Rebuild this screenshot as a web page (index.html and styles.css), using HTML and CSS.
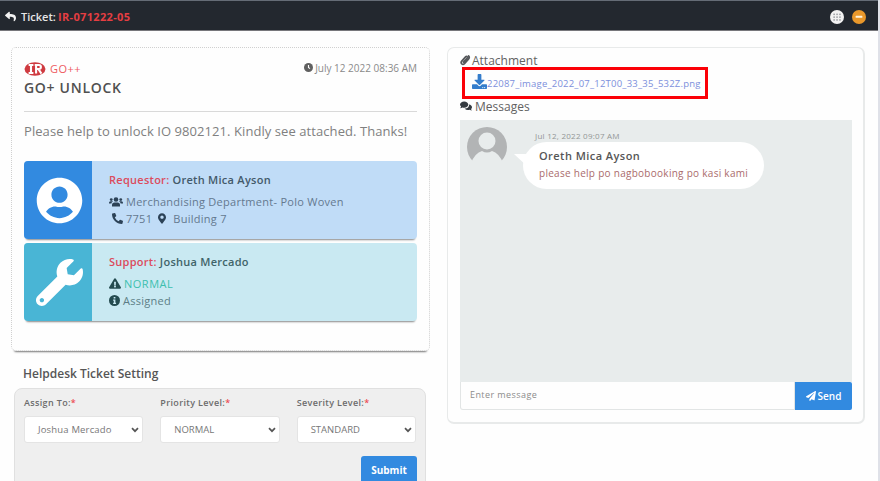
FILE: index.html
```html
<!DOCTYPE html>
<html lang="en">
<head>
<meta charset="utf-8">
<title>Ticket IR-071222-05</title>
<link rel="stylesheet" href="styles.css">
</head>
<body>
<div class="window">
  <header class="topbar">
    <svg class="back" viewBox="0 0 512 512"><path d="M8.309 189.836L184.313 37.851C199.719 24.546 224 35.347 224 56.015v80.053c160.629 1.839 288 34.032 288 186.258 0 61.441-39.581 122.309-83.333 154.132-13.653 9.931-33.111-2.533-28.077-18.631 45.344-145.012-21.507-183.51-176.59-185.742V360c0 20.7-24.3 31.453-39.687 18.164l-176.004-152c-11.071-9.562-11.086-26.753 0-36.328z"/></svg>
    <span class="topbar-label">Ticket:</span>
    <span class="topbar-id">IR-071222-05</span>
    <svg class="round grid" viewBox="0 0 14 14"><circle cx="7" cy="7" r="7" fill="#f2f2f2"/><g fill="#a3a6aa"><rect x="3.3" y="3.6" width="1.7" height="1.5"/><rect x="6.2" y="3.6" width="1.7" height="1.5"/><rect x="9.1" y="3.6" width="1.7" height="1.5"/><rect x="3.3" y="6.4" width="1.7" height="1.5"/><rect x="6.2" y="6.4" width="1.7" height="1.5"/><rect x="9.1" y="6.4" width="1.7" height="1.5"/><rect x="3.3" y="9.2" width="1.7" height="1.5"/><rect x="6.2" y="9.2" width="1.7" height="1.5"/><rect x="9.1" y="9.2" width="1.7" height="1.5"/></g></svg>
    <svg class="round" viewBox="0 0 14 14"><circle cx="7" cy="7" r="7" fill="#e9982b"/><rect x="3.6" y="5.8" width="6.8" height="2" rx=".6" fill="#fff3dc"/></svg>
  </header>

  <main class="columns">
    <div class="left">
      <section class="ticket">
        <div class="ticket-head">
          <svg class="logo" viewBox="0 0 22 14"><ellipse cx="11" cy="7" rx="10.5" ry="6.7" fill="#cf3a40"/><g fill="none" stroke="#fff" stroke-width="2.1"><path d="M7 2.6v8.8M4.6 3h4.8M4.6 11h4.8M12.1 2.5v9M10.7 3h4.2q2 0 2 2t-2 2h-2.8M14.4 7l3 4.6"/></g></svg>
          <span class="brand">GO++</span>
          <svg class="clock" viewBox="0 0 16 16"><circle cx="8" cy="8" r="8" fill="#606060"/><path d="M8 3.5V8l2.6 2" fill="none" stroke="#fff" stroke-width="2"/></svg>
          <span class="date">July 12 2022 08:36 AM</span>
        </div>
        <h1>GO+ UNLOCK</h1>
        <p class="description">Please help to unlock IO 9802121. Kindly see attached. Thanks!</p>
        <article class="person requestor">
          <div class="tile"><svg viewBox="0 0 496 512"><path d="M248 8C111 8 0 119 0 256s111 248 248 248 248-111 248-248S385 8 248 8zm0 96c48.6 0 88 39.4 88 88s-39.4 88-88 88-88-39.4-88-88 39.4-88 88-88zm0 344c-58.7 0-111.3-26.6-146.5-68.2 18.8-35.4 55.6-59.8 98.5-59.8 2.4 0 4.8.4 7.1 1.1 13 4.2 26.6 6.9 40.9 6.9 14.3 0 28-2.7 40.9-6.9 2.3-.7 4.7-1.1 7.1-1.1 42.9 0 79.7 24.4 98.5 59.8C359.3 421.4 306.7 448 248 448z"/></svg></div>
          <div class="info">
            <div class="name"><b>Requestor:</b> Oreth Mica Ayson</div>
            <div class="line"><svg class="users" viewBox="0 0 28 20"><circle cx="14" cy="5" r="4.6"/><circle cx="4.5" cy="5.2" r="2.8"/><circle cx="23.5" cy="5.2" r="2.8"/><path d="M6 19v-3q0-5 5-5h6q5 0 5 5v3zM0 13v-1.500q0-3 3-3h3.500q1 0 1.700.6Q5 10.600 4.700 13zM28 13v-1.500q0-3-3-3h-3.500q-1 0-1.700.6Q23 10.600 23.300 13z"/></svg><span class="dept">Merchandising Department- Polo Woven</span></div>
            <div class="line contact"><svg class="phone" viewBox="0 0 512 512"><path d="M497.39 361.8l-112-48a24 24 0 0 0-28 6.9l-49.6 60.6A370.66 370.66 0 0 1 130.6 204.11l60.6-49.6a23.94 23.94 0 0 0 6.9-28l-48-112A24.16 24.16 0 0 0 122.6.61l-104 24A24 24 0 0 0 0 48c0 256.5 207.9 464 464 464a24 24 0 0 0 23.4-18.6l24-104a24.29 24.29 0 0 0-14.01-27.6z"/></svg><span class="ext">7751</span><svg class="pin" viewBox="0 0 384 512"><path d="M172.268 501.67C26.97 291.031 0 269.413 0 192 0 85.961 85.961 0 192 0s192 85.961 192 192c0 77.413-26.97 99.031-172.268 309.67-9.535 13.774-29.93 13.773-39.464 0zM192 272c44.183 0 80-35.817 80-80s-35.817-80-80-80-80 35.817-80 80 35.817 80 80 80z"/></svg><span class="building">Building 7</span></div>
          </div>
        </article>
        <article class="person support">
          <div class="tile"><svg viewBox="0 0 512 512"><path d="M507.73 109.1c-2.24-9.03-13.54-12.09-20.12-5.51l-74.36 74.36-67.88-11.31-11.31-67.88 74.36-74.36c6.62-6.62 3.43-17.9-5.66-20.16-47.38-11.74-99.55.91-136.58 37.93-39.64 39.64-50.55 97.1-34.05 147.2L18.74 402.76c-24.99 24.99-24.99 65.51 0 90.5 24.99 24.99 65.51 24.99 90.5 0l213.21-213.21c50.12 16.71 107.47 5.68 147.37-34.22 37.07-37.07 49.7-89.32 37.91-136.73zM64 472c-13.25 0-24-10.75-24-24 0-13.26 10.75-24 24-24s24 10.74 24 24c0 13.25-10.75 24-24 24z"/></svg></div>
          <div class="info">
            <div class="name"><b>Support:</b> Joshua Mercado</div>
            <div class="line"><svg class="warn" viewBox="0 0 576 512"><path d="M569.517 440.013C587.975 472.007 564.806 512 527.94 512H48.054c-36.937 0-59.999-40.055-41.577-71.987L246.423 23.985c18.467-32.009 64.72-31.951 83.154 0l239.94 416.028zM288 354c-25.405 0-46 20.595-46 46s20.595 46 46 46 46-20.595 46-46-20.595-46-46-46zm-43.673-165.346l7.418 136c.347 6.364 5.609 11.346 11.982 11.346h48.546c6.373 0 11.635-4.982 11.982-11.346l7.418-136c.375-6.874-5.098-12.654-11.982-12.654h-63.383c-6.884 0-12.356 5.780-11.981 12.654z"/></svg><span class="priority">NORMAL</span></div>
            <div class="line"><svg class="status-icon" viewBox="0 0 16 16"><circle cx="8" cy="8" r="8"/><path d="M6.800 3h2.500v2.200H6.800zM6 6.500h3.300v4.700h1V13H6v-1.800h1V8.300H6z" fill="#c9e9f2"/></svg><span class="status">Assigned</span></div>
          </div>
        </article>
      </section>

      <h2>Helpdesk Ticket Setting</h2>
      <form class="settings">
        <div class="fields">
          <div class="field"><label>Assign To:<i>*</i></label><div class="select"><span class="assignee">Joshua Mercado</span><svg viewBox="0 0 8 6"><path d="M1 1.200l3 3 3-3"/></svg></div></div>
          <div class="field"><label>Priority Level:<i>*</i></label><div class="select"><span>NORMAL</span><svg viewBox="0 0 8 6"><path d="M1 1.200l3 3 3-3"/></svg></div></div>
          <div class="field"><label>Severity Level:<i>*</i></label><div class="select"><span>STANDARD</span><svg viewBox="0 0 8 6"><path d="M1 1.200l3 3 3-3"/></svg></div></div>
        </div>
        <button type="button" class="submit">Submit</button>
      </form>
    </div>

    <section class="conversation">
      <h3 class="attachment-title"><svg class="clip" viewBox="0 0 16 18"><path d="M5.500 12.500l5.800-6.300q1.200-1.500 0-2.500-1.200-.9-2.400.4L2.800 10.700q-2 2.600 0 4.500 2.200 1.700 4.400-.5l6.300-7q2.500-3.300.2-5.300" fill="none" stroke="#55585b" stroke-width="2.700" stroke-linecap="round"/></svg><span>Attachment</span></h3>
      <div class="attachment"><svg viewBox="0 0 512 512"><path d="M216 0h80c13.300 0 24 10.700 24 24v168h87.700c17.800 0 26.700 21.500 14.100 34.100L269.700 378.300c-7.500 7.500-19.800 7.500-27.300 0L90.100 226.100c-12.600-12.600-3.700-34.100 14.100-34.100H192V24c0-13.300 10.700-24 24-24zm296 376v112c0 13.300-10.700 24-24 24H24c-13.300 0-24-10.700-24-24V376c0-13.300 10.700-24 24-24h146.700l49 49c20.100 20.100 52.500 20.100 72.600 0l49-49H488c13.300 0 24 10.700 24 24zm-124 88c0-11-9-20-20-20s-20 9-20 20 9 20 20 20 20-9 20-20zm64 0c0-11-9-20-20-20s-20 9-20 20 9 20 20 20 20-9 20-20z"/></svg><span>22087_image_2022_07_12T00_33_35_532Z.png</span></div>
      <h3 class="messages-title"><svg class="comments" viewBox="0 0 26 20"><path d="M9 0c5 0 9 3 9 7s-4 7-9 7q-2 0-3.800-.7Q3 15 .3 15 2 13 2.300 11.300 0 9.500 0 7c0-4 4-7 9-7z"/><path d="M19.500 6.500c3.800.7 6.500 3 6.500 6q0 2.300-2 4 .3 1.700 1.700 3.200-2.700 0-4.700-1.500-1.600.6-3.500.6-5 0-7.500-3.300c6 0 10.500-4 9.500-9z"/></svg><span>Messages</span></h3>
      <div class="chat">
        <svg class="avatar" viewBox="0 0 40 36"><circle cx="20" cy="20" r="20" fill="#b2b4b5"/><circle cx="20" cy="14" r="8.500" fill="#e8ecec"/><path d="M4 36Q8 26 15 24q5 3 10 0 7 2 11 12z" fill="#e8ecec"/></svg>
        <div class="message">
          <time>Jul 12, 2022 09:07 AM</time>
          <div class="bubble"><strong>Oreth Mica Ayson</strong><p>please help po nagbobooking po kasi kami</p></div>
        </div>
      </div>
      <div class="composer">
        <div class="entry">Enter message</div>
        <button type="button" class="send"><svg viewBox="0 0 512 512"><path d="M476 3.200L12.500 270.600c-18.100 10.400-15.800 35.600 2.200 43.200L121 358.400l287.300-253.200c5.500-4.900 13.300 2.600 8.600 8.300L176 407v80.500c0 23.600 28.500 32.900 42.500 15.800L282 426l124.600 52.200c14.200 6 30.400-2.900 33-18.200l72-432C515 7.800 493.300-6.800 476 3.200z"/></svg><span>Send</span></button>
      </div>
    </section>
  </main>
</div>
</body>
</html>
```
FILE: styles.css
```css
* { box-sizing: border-box; }
body { margin: 0; background: #dfe1e8; font-family: "Open Sans", sans-serif; color: #555; }
h1, h2, h3, p { margin: 0; }
svg { display: block; flex: none; overflow: visible; }
span, label, .name { white-space: nowrap; }
.window { width: 878px; height: 481px; overflow: hidden; background: #fefefe; }
.topbar { height: 31px; display: flex; align-items: center; padding: 2px 12px 0 5px; background: #23282f; border-top: 1px solid #656c76; border-bottom: 1px solid #77777b; font-size: 11px; }
.back { width: 11px; height: 11px; fill: #f2f2f2; margin-right: 5px; }
.topbar-label { color: #e6e6e6; font-weight: 600; width: 37px; }
.topbar-id { color: #e53e42; font-weight: 700; letter-spacing: .33px; }
.round { width: 14px; height: 14px; }
.grid { margin-left: auto; margin-right: 8px; }
.columns { display: flex; align-items: flex-start; padding: 16px 13px 0 11px; gap: 17px; }
.left { width: 419px; }
.ticket { height: 304px; border: 1px dotted #d0d0d0; border-radius: 5px; padding: 12px 12px 0 12px; box-shadow: 0 4px 2px -3px #777; }
.ticket-head { display: flex; align-items: center; height: 17px; margin-bottom: 2px; }
.logo { width: 22px; height: 14px; margin-right: 4px; }
.brand { color: #ee5a5e; font-size: 11px; letter-spacing: .5px; }
.clock { width: 9px; height: 9px; margin: -2px 2px 0 auto; }
.date { font-size: 10px; color: #8a8a8a; margin-top: -2px; }
h1 { font-size: 14px; line-height: 18px; font-weight: 600; color: #505050; height: 32px; letter-spacing: .7px; }
.description { border-top: 1px solid #d9d9d9; font-size: 13px; line-height: 20px; color: #808080; padding-top: 9px; height: 50px; white-space: nowrap; letter-spacing: .07px; }
.person { display: flex; height: 78px; margin-bottom: 4px; border-radius: 4px; box-shadow: 0 3px 2px -2px #888; }
.tile { width: 68px; padding-left: 2px; border-radius: 4px 0 0 4px; display: grid; place-items: center; fill: #fff; }
.tile svg { width: 47px; height: 47px; }
.info { padding-left: 17px; }
.requestor { background: #c0dcf7; }
.requestor .tile { background: #328ae0; }
.support { background: #c9e9f2; }
.support .tile { background: #49b5d5; }
.name { font-size: 11px; line-height: 15px; padding-top: 11px; height: 32px; color: #43596a; font-weight: 600; letter-spacing: .27px; }
.name b { color: #dc4b5d; font-weight: 600; }
.support .name { color: #3f6469; }
.line { display: flex; align-items: center; height: 17px; font-size: 11px; color: #64798f; fill: #2c4257; letter-spacing: .27px; }
.support .line { color: #5c7e86; fill: #244b50; }
.users { width: 14px; height: 10px; margin-right: 3px; }
.phone { width: 11px; height: 11px; margin: 0 3px 0 3px; }
.pin { width: 8px; height: 11px; margin: 0 7px 0 6px; }
.warn { width: 12px; height: 11px; margin-right: 3px; }
.support .line .priority { color: #3cbfae; letter-spacing: .5px; }
.status-icon { width: 11px; height: 11px; margin-right: 3px; }
h2 { font-size: 12px; line-height: 16px; font-weight: 600; color: #565656; margin: 15px 0 6px 12px; white-space: nowrap; }
.settings { margin-left: 3px; width: 412px; height: 110px; border: 1px solid #e0e0e0; border-radius: 8px; background: #efefef; padding: 5px 8px 0 9px; }
.fields { display: flex; gap: 17px; padding-right: 1px; }
.field { width: 120px; }
label { display: block; font-size: 9px; line-height: 17px; height: 22px; font-weight: 600; color: #6c6c6c; letter-spacing: .35px; }
label i { color: #ed4d55; font-style: normal; }
.select { height: 27px; border: 1px solid #e4e4e4; border-radius: 3px; background: #fff; display: flex; align-items: center; justify-content: space-between; padding: 0 3px 0 13px; font-size: 9.500px; color: #777; }
.assignee { letter-spacing: .17px; }
.select svg { width: 8px; height: 6px; fill: none; stroke: #555; stroke-width: 1.700; }
button { font-family: inherit; border: 0; color: #fff; background: #328ae0; padding: 0; }
.submit { display: block; width: 56px; height: 28px; margin: 13px 0 0 auto; border-radius: 3px 3px 0 0; font-size: 10px; font-weight: 700; }
.conversation { width: 418px; height: 377px; border: 1px solid #e8eaea; border-width: 1px 2px 2px 1px; border-radius: 7px; padding: 4px 11px 0 12px; }
h3 { display: flex; align-items: center; height: 16px; font-size: 12px; font-weight: 400; color: #626262; }
.clip { width: 10px; height: 12px; margin-right: 2px; }
.attachment { display: flex; align-items: center; width: 246px; height: 32px; margin: -1px 0 0 2px; border: 3px solid #fb0007; padding: 0 0 0 7px; font-size: 9.500px; color: #7c8fdc; letter-spacing: .2px; }
.attachment svg { width: 15px; height: 15px; fill: #347dcc; margin-top: -4px; }
.comments { width: 12px; height: 10px; fill: #343a40; margin-right: 3px; }
.messages-title { margin: -1px 0 6px; }
.chat { height: 262px; background: #e8ecec; padding: 7px 0 0 7px; display: flex; align-items: flex-start; }
.avatar { width: 40px; height: 36px; overflow: hidden; }
.message { margin-left: 16px; }
time { display: block; font-size: 8px; line-height: 12px; padding-left: 12px; margin-top: 3px; color: #929696; white-space: nowrap; letter-spacing: .25px; }
.bubble { position: relative; width: 241px; height: 47px; border-radius: 24px; background: #fff; padding: 5px 0 0 16px; }
.bubble::before { content: ""; position: absolute; left: -9px; top: 12px; border-bottom: 13px solid transparent; border-right: 14px solid #fff; }
.bubble strong { display: block; font-size: 11px; line-height: 17px; font-weight: 600; color: #565656; white-space: nowrap; letter-spacing: .45px; }
.bubble p { font-size: 10px; line-height: 18px; color: #aa6b6c; white-space: nowrap; letter-spacing: .28px; }
.composer { display: flex; height: 28px; }
.entry { flex: 1; border: 1px solid #e2e5e5; border-top: 0; border-radius: 0 0 0 3px; padding: 0 9px; font-size: 9px; line-height: 26px; color: #8c8c8c; letter-spacing: .42px; }
.send { width: 57px; border-radius: 0 2px 2px 0; display: flex; align-items: center; justify-content: center; gap: 2px; font-size: 10px; font-weight: 600; }
.send svg { width: 10px; height: 10px; fill: #fff; }
```
